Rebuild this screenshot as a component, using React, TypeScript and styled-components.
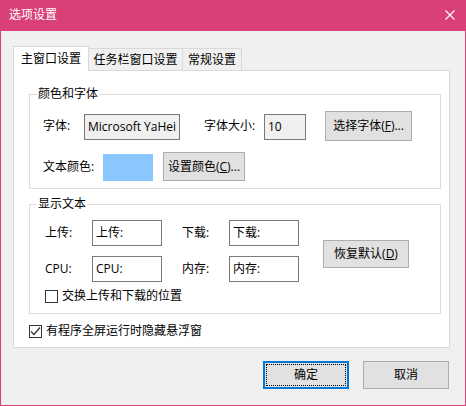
import React from "react";
import styled, { createGlobalStyle } from "styled-components";

const Global = createGlobalStyle`
  html, body { margin: 0; padding: 0; background: #f0f0f0; }
  body {
    font-family: "Open Sans", "Noto Sans CJK SC", sans-serif;
    font-size: 12px;
    color: #000;
  }
  * { box-sizing: border-box; }
`;

const Window = styled.div`
  width: 466px;
  height: 406px;
  display: flex;
  flex-direction: column;
  background: #f0f0f0;
  border: 1px solid #d94077;
  border-top: none;
`;

const TitleBar = styled.div`
  height: 31px;
  flex: none;
  display: flex;
  align-items: center;
  justify-content: space-between;
  padding: 0 10px 1px 8px;
  background: #d94077;
  color: #fff;
  font-size: 12px;
  line-height: 16px;
`;

const CloseIcon = () => (
  <svg width="10" height="10" viewBox="0 0 10 10">
    <path d="M0.5 0.5 L9.5 9.5 M9.5 0.5 L0.5 9.5" stroke="#fff" strokeWidth="1.1" />
  </svg>
);

const Body = styled.div`
  flex: 1;
  display: flex;
  flex-direction: column;
  padding: 15px 15px 0 12px;
`;

const TabStrip = styled.div`
  height: 24px;
  display: flex;
  align-items: flex-end;
  position: relative;
  z-index: 1;
`;

const Tab = styled.div<{ $active?: boolean; $w: number }>`
  width: ${(p) => p.$w}px;
  height: ${(p) => (p.$active ? 25 : 22)}px;
  margin-bottom: ${(p) => (p.$active ? -1 : 0)}px;
  display: flex;
  align-items: center;
  justify-content: center;
  border: 1px solid #d9d9d9;
  border-bottom: none;
  background: ${(p) => (p.$active ? "#fff" : "#f0f0f0")};
  line-height: 16px;
  & + & { margin-left: -1px; }
`;

const Panel = styled.div`
  height: 278px;
  flex: none;
  background: #fff;
  border: 1px solid #d9d9d9;
  padding: 15px 8px 0 15px;
  display: flex;
  flex-direction: column;
`;

const GroupBox = styled.fieldset<{ $mt?: number }>`
  margin: ${(p) => p.$mt ?? 0}px 0 0 0;
  padding: 0;
  min-width: 0;
  border: 1px solid #dcdcdc;
`;

const Legend = styled.legend`
  margin-left: 7px;
  padding: 0 1px;
  height: 16px;
  line-height: 16px;
`;

const GroupBody = styled.div<{ $pad: string }>`
  padding: ${(p) => p.$pad};
`;

const Row = styled.div<{ $mt?: number }>`
  display: flex;
  align-items: flex-start;
  margin-top: ${(p) => p.$mt ?? 0}px;
`;

const Label = styled.div<{ $w: number; $mt?: number; $ml?: number }>`
  width: ${(p) => p.$w}px;
  height: 26px;
  margin-top: ${(p) => p.$mt ?? 0}px;
  margin-left: ${(p) => p.$ml ?? 0}px;
  display: flex;
  align-items: center;
  line-height: 16px;
  white-space: nowrap;
`;

const TextBox = styled.div<{ $w: number; $mt?: number; $ro?: boolean }>`
  width: ${(p) => p.$w}px;
  height: 26px;
  margin-top: ${(p) => p.$mt ?? 0}px;
  border: 1px solid #7a7a7a;
  background: ${(p) => (p.$ro ? "#f0f0f0" : "#fff")};
  padding: 0 3px;
  display: flex;
  align-items: center;
  line-height: 16px;
  white-space: nowrap;
  overflow: hidden;
`;

const Swatch = styled.div<{ $color: string }>`
  width: 50px;
  height: 27px;
  margin-top: 2px;
  background: ${(p) => p.$color};
`;

const Button = styled.div<{ $w: number; $h: number; $ml?: number; $mt?: number }>`
  width: ${(p) => p.$w}px;
  height: ${(p) => p.$h}px;
  margin-left: ${(p) => p.$ml ?? 0}px;
  margin-top: ${(p) => p.$mt ?? 0}px;
  background: #e1e1e1;
  border: 1px solid #adadad;
  display: flex;
  align-items: center;
  justify-content: center;
  line-height: 16px;
  white-space: nowrap;
  flex: none;
`;

const DefaultButton = styled(Button)`
  border: 2px solid #0078d7;
  position: relative;
  &::after {
    content: "";
    position: absolute;
    inset: 1px;
    border: 1px dotted #000;
  }
`;

const U = styled.span`
  text-decoration: underline;
  text-underline-offset: 1px;
`;

const Grid = styled.div`
  display: grid;
  grid-template-columns: 47px 90px 47px 94px 86px;
  grid-template-rows: 26px 26px;
  row-gap: 10px;
`;

const CheckRow = styled.div<{ $mt: number }>`
  display: flex;
  align-items: center;
  height: 16px;
  margin-top: ${(p) => p.$mt}px;
  line-height: 16px;
  gap: 4px;
`;

const Box = styled.div`
  width: 13px;
  height: 13px;
  border: 1px solid #333;
  background: #fff;
  display: flex;
  align-items: center;
  justify-content: center;
  flex: none;
`;

const CheckBox = ({ checked }: { checked?: boolean }) => (
  <Box>
    {checked && (
      <svg width="11" height="11" viewBox="0 0 11 11">
        <path d="M1 5.5 L4 8.5 L10 1.5" fill="none" stroke="#333" strokeWidth="1.3" />
      </svg>
    )}
  </Box>
);

const Footer = styled.div`
  display: flex;
  justify-content: flex-end;
  gap: 14px;
  padding: 13px 1px 0 0;
`;

export default function App() {
  return (
    <>
      <Global />
      <Window>
        <TitleBar>
          <span>选项设置</span>
          <CloseIcon />
        </TitleBar>
        <Body>
          <TabStrip>
            <Tab $active $w={76}>主窗口设置</Tab>
            <Tab $w={95}>任务栏窗口设置</Tab>
            <Tab $w={60}>常规设置</Tab>
          </TabStrip>
          <Panel>
            <GroupBox>
              <Legend>颜色和字体</Legend>
              <GroupBody $pad="9px 0 7px 13px">
                <Row>
                  <Label $w={41} $mt={2}>字体:</Label>
                  <TextBox $w={96} $mt={3} $ro>Microsoft YaHei</TextBox>
                  <Label $w={60} $mt={2} $ml={24}>字体大小:</Label>
                  <TextBox $w={42} $mt={3} $ro>10</TextBox>
                  <Button $w={87} $h={30} $ml={19}>
                    选择字体(<U>F</U>)...
                  </Button>
                </Row>
                <Row $mt={11}>
                  <Label $w={60} $mt={2}>文本颜色:</Label>
                  <Swatch $color="#8ac7ff" />
                  <Button $w={82} $h={29} $ml={10}>
                    设置颜色(<U>C</U>)...
                  </Button>
                </Row>
              </GroupBody>
            </GroupBox>
            <GroupBox $mt={7}>
              <Legend>显示文本</Legend>
              <GroupBody $pad="8px 0 9px 15px">
                <Grid>
                  <Label $w={47}>上传:</Label>
                  <TextBox $w={70}>上传:</TextBox>
                  <Label $w={47}>下载:</Label>
                  <TextBox $w={70}>下载:</TextBox>
                  <Button $w={86} $h={28} $mt={20} style={{ gridRow: "1 / span 2", gridColumn: 5 }}>
                    恢复默认(<U>D</U>)
                  </Button>
                  <Label $w={47}>CPU:</Label>
                  <TextBox $w={70}>CPU:</TextBox>
                  <Label $w={47}>内存:</Label>
                  <TextBox $w={70}>内存:</TextBox>
                </Grid>
                <CheckRow $mt={6}>
                  <CheckBox />
                  <span>交换上传和下载的位置</span>
                </CheckRow>
              </GroupBody>
            </GroupBox>
            <CheckRow $mt={9}>
              <CheckBox checked />
              <span>有程序全屏运行时隐藏悬浮窗</span>
            </CheckRow>
          </Panel>
          <Footer>
            <DefaultButton $w={86} $h={28}>确定</DefaultButton>
            <Button $w={86} $h={28}>取消</Button>
          </Footer>
        </Body>
      </Window>
    </>
  );
}
